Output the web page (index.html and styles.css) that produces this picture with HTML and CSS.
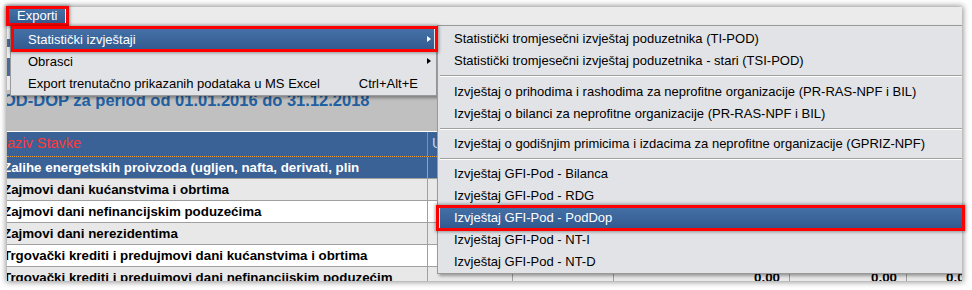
FILE: index.html
```html
<!DOCTYPE html>
<html lang="hr">
<head>
<meta charset="utf-8">
<title>Exporti</title>
<link rel="stylesheet" href="styles.css">
</head>
<body>
<div class="screen">
  <div class="menubar"><span class="mb-item">Exporti</span></div>
  <div class="toolbar"><span class="tb-bit tb-a"></span><span class="tb-bit tb-b"></span></div>
  <div class="panel"><div class="title">OD-DOP za period od 01.01.2016 do 31.12.2018</div></div>
  <div class="grid">
    <div class="row head"><div class="c c1">aziv Stavke</div><div class="c c2">U</div><div class="c c3"></div><div class="c c4"></div><div class="c c5"></div><div class="c c6"></div></div>
    <div class="row sel"><div class="c c1 t">Zalihe energetskih proivzoda (ugljen, nafta, derivati, plin</div><div class="c c2"></div><div class="c c3"></div><div class="c c4"></div><div class="c c5"></div><div class="c c6"></div></div>
    <div class="row alt"><div class="c c1 t">Zajmovi dani kućanstvima i obrtima</div><div class="c c2"></div><div class="c c3"></div><div class="c c4"></div><div class="c c5"></div><div class="c c6"></div></div>
    <div class="row"><div class="c c1 t">Zajmovi dani nefinancijskim poduzećima</div><div class="c c2"></div><div class="c c3"></div><div class="c c4"></div><div class="c c5"></div><div class="c c6"></div></div>
    <div class="row alt"><div class="c c1 t">Zajmovi dani nerezidentima</div><div class="c c2"></div><div class="c c3"></div><div class="c c4"></div><div class="c c5"></div><div class="c c6"></div></div>
    <div class="row"><div class="c c1 t">Trgovački krediti i predujmovi dani kućanstvima i obrtima</div><div class="c c2"></div><div class="c c3"></div><div class="c c4"></div><div class="c c5"></div><div class="c c6"></div></div>
    <div class="row alt"><div class="c c1 t">Trgovački krediti i predujmovi dani nefinancijskim poduzećim</div><div class="c c2"></div><div class="c c3"></div><div class="c c4 num">0,00</div><div class="c c5 num">0,00</div><div class="c c6 num">0,00</div></div>
  </div>

  <div class="menu menu1">
    <div class="item hl"><span class="label">Statistički izvještaji</span><span class="arrow"></span></div>
    <div class="item"><span class="label">Obrasci</span><span class="arrow"></span></div>
    <div class="item"><span class="label">Export trenutačno prikazanih podataka u MS Excel</span><span class="shortcut">Ctrl+Alt+E</span></div>
  </div>

  <div class="menu sub">
    <div class="item">Statistički tromjesečni izvještaj poduzetnika (TI-POD)</div>
    <div class="item">Statistički tromjesečni izvještaj poduzetnika - stari (TSI-POD)</div>
    <div class="sep s9"></div>
    <div class="item">Izvještaj o prihodima i rashodima za neprofitne organizacije (PR-RAS-NPF i BIL)</div>
    <div class="item">Izvještaj o bilanci za neprofitne organizacije (PR-RAS-NPF i BIL)</div>
    <div class="sep"></div>
    <div class="item">Izvještaj o godišnjim primicima i izdacima za neprofitne organizacije (GPRIZ-NPF)</div>
    <div class="sep"></div>
    <div class="item">Izvještaj GFI-Pod - Bilanca</div>
    <div class="item">Izvještaj GFI-Pod - RDG</div>
    <div class="item hl">Izvještaj GFI-Pod - PodDop</div>
    <div class="item">Izvještaj GFI-Pod - NT-I</div>
    <div class="item">Izvještaj GFI-Pod - NT-D</div>
  </div>
</div>
<div class="mark mark-exporti"></div>
<div class="mark mark-stat"></div>
<div class="mark mark-pod"></div>
</body>
</html>
```
FILE: styles.css
```css
* { box-sizing: border-box; }
html, body { margin: 0; padding: 0; background: #ffffff; }
body {
  position: relative;
  width: 972px;
  height: 290px;
  overflow: hidden;
  font-family: "Liberation Sans", Arial, sans-serif;
  font-size: 13px;
  color: #000;
}
.screen {
  position: relative;
  margin: 7px 0 0 7px;
  width: 955px;
  height: 274px;
  overflow: hidden;
  background: #c0c0c0;
  box-shadow: 0 0 6px 1px rgba(0, 0, 0, 0.45);
}
.menubar {
  height: 18px;
  padding: 1px 0 0 2px;
  display: flex;
  background: #ebebeb;
}
.mb-item {
  width: 56px;
  height: 15px;
  line-height: 15px;
  padding-left: 8px;
  color: #fff;
  background: linear-gradient(#4672a8, #345c92);
}
.toolbar {
  height: 65px;
  background: #ececec;
  display: flex;
  flex-direction: column;
  gap: 11px;
  padding-top: 14px;
}
.tb-bit { width: 3px; background: #4a6c9c; }
.tb-a { height: 8px; }
.tb-b { height: 18px; }
.panel {
  height: 42px;
  background: #c0c0c0;
  border-bottom: 1px solid #ffffff;
}
.title {
  margin-left: -4px;
  line-height: 20px;
  padding-top: 0;
  font-size: 16.5px;
  font-weight: bold;
  color: #2160a2;
  white-space: nowrap;
}
.grid { width: 1100px; }
.row { display: flex; height: 22px; border-bottom: 1px solid #a0a0a0; background: #ffffff; }
.row.alt { background: #e8e8e8; }
.row.sel { background: #3a6296; color: #fff; }
.row.head { height: 25px; background: #3a6296; border-bottom: 1px dotted #f0a030; }
.c {
  border-right: 1px solid #a0a0a0;
  white-space: nowrap;
  overflow: hidden;
  display: flex;
  align-items: center;
}
.head .c { border-right-color: #8090a8; padding-bottom: 2px; }
.c1 { width: 421px; }
.c2 { width: 85px; }
.c3 { width: 101px; }
.c4 { width: 176px; }
.c5 { width: 117px; }
.c6 { width: 75px; }
.head .c1 { color: #ff3838; font-size: 14.5px; padding-left: 0; }
.head .c2 { color: #c6d6ec; padding-left: 4px; font-size: 14px; }
.c1.t { font-weight: bold; font-size: 13.33px; padding-left: 0; margin-left: -4px; width: 425px; }
.num { justify-content: flex-end; padding-right: 9px; font-weight: bold; font-size: 13.33px; }

.menu {
  position: absolute;
  background: #e2e3e6;
  border: 1px solid #9a9a9a;
  box-shadow: 2px 2px 3px rgba(0, 0, 0, 0.35);
  padding: 1px 2px;
}
.menu1 { left: 3px; top: 19px; width: 427px; }
.sub { left: 430px; top: 18px; width: 527px; padding-right: 0; }
.item {
  height: 22px;
  display: flex;
  align-items: center;
  white-space: nowrap;
  padding-left: 15px;
  padding-right: 2px;
}
.sub .item { padding-left: 14px; }
.item.hl { background: linear-gradient(#4672a8, #325a90); color: #fff; }
.label { flex: 1; }
.shortcut { margin-right: 14px; }
.arrow {
  width: 0;
  height: 0;
  margin-right: 1px;
  border-left: 4px solid #000;
  border-top: 3.5px solid transparent;
  border-bottom: 3.5px solid transparent;
}
.hl .arrow { border-left-color: #fff; }
.sep { height: 8px; display: flex; align-items: center; }
.sep.s9 { height: 9px; }
.sep::before {
  content: "";
  flex: 1;
  height: 1px;
  background: #a0a0a0;
  box-shadow: 0 1px 0 #ffffff;
}

.mark {
  position: absolute;
  border: 3px solid #ff0000;
  box-shadow: 0 0 3px 1px rgba(0, 0, 0, 0.35);
}
.mark-exporti { left: 6px; top: 6px; width: 63px; height: 20px; }
.mark-stat { left: 11px; top: 26px; width: 427px; height: 26px; }
.mark-pod { left: 436px; top: 205px; width: 529px; height: 26px; }
```
